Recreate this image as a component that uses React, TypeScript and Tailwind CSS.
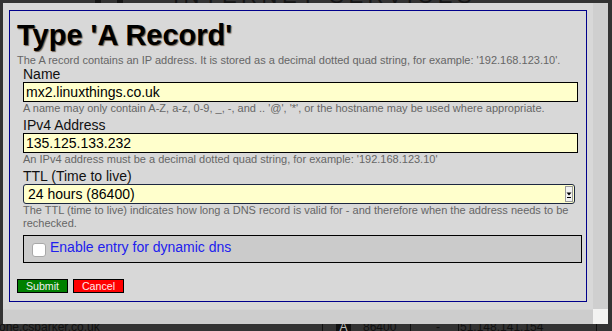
export default function App() {
  return (
    <div className="relative h-[331px] w-[612px] overflow-hidden bg-[#333333] font-['Liberation_Sans',Arial,sans-serif]">
      {/* page behind the dialog */}
      <div className="flex h-full flex-col justify-between">
        <div className="-mt-[15px] flex items-end pl-[95px]">
          <div className="h-[18px] w-[6px] rounded-full bg-[#151515]" />
          <div className="ml-[16px] h-[18px] w-[6px] bg-[#151515]" />
          <span className="ml-[50px] text-[22px] leading-[22px] tracking-[4.5px] text-[#151515]">
            INTERNET SERVICES
          </span>
        </div>
        <div className="flex h-[11px] items-start text-[12px] leading-[14px] text-[#111]">
          <span className="-ml-[1px] w-[323px]">one.csparker.co.uk</span>
          <span className="h-[14px] w-[14px] border-l border-[#111]" />
          <span className="flex h-[14px] w-[15px] justify-center bg-[#111] text-[#bbb]">A</span>
          <span className="ml-[12px] w-[47px]">86400</span>
          <span className="h-[14px] w-[26px] border-l border-[#111]" />
          <span className="w-[22px]">-</span>
          <span className="w-[138px] border-l border-[#111] pl-[1px]">51.148.141.154</span>
          <span className="h-[14px] border-l border-[#111]" />
        </div>
      </div>

      {/* dialog */}
      <div className="absolute left-[3px] top-[3px] flex h-[321px] w-[605px] flex-col">
        <div className="flex min-h-0 flex-1">
          <div className="flex-1 bg-[#d8d8d8] px-[6px] py-[7px]">
            <div className="h-full border border-[#00008b] pl-[7px] pr-[4px] pt-[10px]">
              <h1 className="text-[29px] font-bold leading-[29px] text-black [text-shadow:1px_1px_1px_#6b5a4a]">
                Type 'A Record'
              </h1>
              <p className="mt-[3px] text-[11px] leading-[14px] text-[#666]">
                The A record contains an IP address. It is stored as a decimal dotted quad string, for example: '192.168.123.10'.
              </p>

              <div className="ml-[6px] flex flex-col">
                <label className="text-[14px] leading-[15px] text-[#111]">Name</label>
                <div className="flex h-[20px] w-[555px] items-center border border-black bg-[#ffffcc] pl-[2px] text-[14px] leading-[18px] text-black">
                  mx2.linuxthings.co.uk
                </div>
                <p className="text-[11px] leading-[13px] text-[#666]">
                  A name may only contain A-Z, a-z, 0-9, _, -, and .. '@', '*', or the hostname may be used where appropriate.
                </p>

                <label className="mt-[3px] text-[14px] leading-[15px] text-[#111]">IPv4 Address</label>
                <div className="flex h-[20px] w-[555px] items-center border border-black bg-[#ffffcc] pl-[2px] text-[14px] leading-[18px] text-black">
                  135.125.133.232
                </div>
                <p className="text-[11px] leading-[13px] text-[#666]">
                  An IPv4 address must be a decimal dotted quad string, for example: '192.168.123.10'
                </p>

                <label className="mt-[3px] text-[14px] leading-[15px] text-[#111]">TTL (Time to live)</label>
                <div className="flex h-[20px] w-[552px] items-center justify-between rounded-[3px] border border-[#1c2740] bg-[#ffffcc] pl-[4px] pr-[1px] text-[14px] leading-[18px] text-black">
                  <span>24 hours (86400)</span>
                  <svg width="8" height="16" viewBox="0 0 8 16">
                    <rect x="0.5" y="0.5" width="7" height="15" fill="#f2f2f2" stroke="#9a9a9a" />
                    <path d="M1.5 6.5 H6.5 L4 9.5 Z" fill="#000" />
                    <path d="M2 11.5 H6" stroke="#000" strokeWidth="1" />
                  </svg>
                </div>
                <p className="w-[555px] text-[11px] leading-[13px] text-[#666]">
                  The TTL (time to live) indicates how long a DNS record is valid for - and therefore when the address needs to be rechecked.
                </p>

                <div className="mt-[5px] flex h-[28px] w-[559px] items-start border border-black bg-[#cbcbcb]">
                  <div className="ml-[8px] mt-[7px] h-[14px] w-[14px] rounded-[3px] border border-[#a8a8a8] bg-white" />
                  <span className="ml-[4px] mt-[3px] text-[14px] leading-[16px] text-[#2020ee]">
                    Enable entry for dynamic dns
                  </span>
                </div>
              </div>

              <div className="mt-[16px] flex gap-[5px]">
                <button className="flex h-[14px] w-[51px] items-center justify-center border border-black bg-[#008000] text-[10.67px] leading-[12px] text-[#eeeeee]">
                  Submit
                </button>
                <button className="flex h-[14px] w-[51px] items-center justify-center border border-black bg-[#ff0000] text-[10.67px] leading-[12px] text-[#ffe8e8]">
                  Cancel
                </button>
              </div>
            </div>
          </div>
          <div className="w-[15px] bg-[#cfcfcf]" />
        </div>
        <div className="flex h-[15px]">
          <div className="flex-1 border-t border-[#d4d4d4] bg-[#cdcdcd]" />
          <div className="w-[15px] bg-[#f3f3f2]" />
        </div>
      </div>
    </div>
  );
}
